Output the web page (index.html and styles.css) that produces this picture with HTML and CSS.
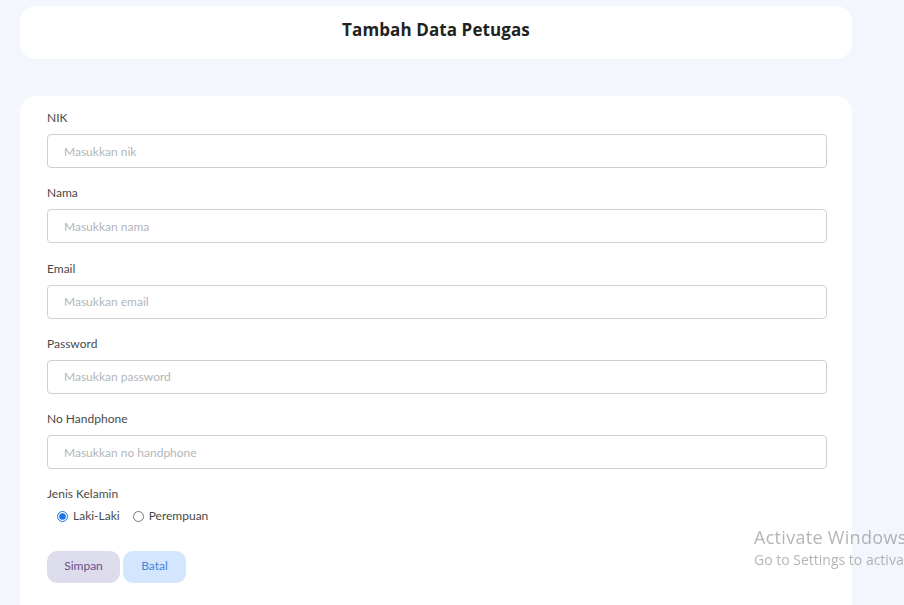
FILE: index.html
```html
<!DOCTYPE html>
<html lang="id">
<head>
<meta charset="utf-8">
<title>Tambah Data Petugas</title>
<link rel="stylesheet" href="styles.css">
</head>
<body>
<div class="page">
  <div class="card header-card">
    <h1 class="title">Tambah Data Petugas</h1>
  </div>
  <form class="card form-card">
    <div class="field">
      <label class="label">NIK</label>
      <input class="input" type="text" placeholder="Masukkan nik">
    </div>
    <div class="field">
      <label class="label">Nama</label>
      <input class="input" type="text" placeholder="Masukkan nama">
    </div>
    <div class="field">
      <label class="label">Email</label>
      <input class="input" type="text" placeholder="Masukkan email">
    </div>
    <div class="field">
      <label class="label">Password</label>
      <input class="input" type="text" placeholder="Masukkan password">
    </div>
    <div class="field">
      <label class="label">No Handphone</label>
      <input class="input" type="text" placeholder="Masukkan no handphone">
    </div>
    <div class="field">
      <label class="label">Jenis Kelamin</label>
      <div class="radios">
        <label class="radio"><input type="radio" name="jk" checked><span>Laki-Laki</span></label>
        <label class="radio"><input type="radio" name="jk"><span>Perempuan</span></label>
      </div>
    </div>
    <div class="actions">
      <button type="button" class="btn btn-save">Simpan</button>
      <button type="button" class="btn btn-cancel">Batal</button>
    </div>
  </form>
</div>
<div class="watermark">
  <div class="wm-title">Activate Windows</div>
  <div class="wm-sub">Go to Settings to activate Windows.</div>
</div>
</body>
</html>
```
FILE: styles.css
```css
html, body {
  margin: 0;
  padding: 0;
  background: #f3f6fd;
  overflow: hidden;
}
body {
  font-family: Lato, "Noto Sans", sans-serif;
  color: #3d3d3d;
}
.page {
  width: 832px;
  padding: 6px 0 0 20px;
  display: flex;
  flex-direction: column;
  gap: 37px;
}
.card {
  background: #ffffff;
  border-radius: 16px;
}
.header-card {
  height: 53px;
  display: flex;
  align-items: center;
  justify-content: center;
}
.title {
  margin: 0;
  font-family: "Open Sans", Lato, sans-serif;
  font-size: 17px;
  font-weight: 700;
  color: #222222;
  letter-spacing: 0.1px;
  transform: translateY(-3px);
}
.form-card {
  padding: 14px 25px 40px 27px;
  display: flex;
  flex-direction: column;
  margin: 0;
}
.field {
  display: flex;
  flex-direction: column;
  margin-bottom: 17.25px;
}
.label {
  font-size: 12px;
  line-height: 16px;
  margin-bottom: 8px;
  color: #4a4a4a;
}
.input {
  height: 34px;
  box-sizing: border-box;
  border: 1px solid #cdd1d6;
  border-radius: 4px;
  padding: 0 16px;
  font-family: Lato, "Noto Sans", sans-serif;
  font-size: 12px;
  color: #333;
  outline: none;
}
.input::placeholder {
  color: #b3b6ba;
}
.radios {
  display: flex;
  gap: 13px;
  margin-top: -2px;
  padding-left: 10px;
}
.radio {
  display: flex;
  align-items: center;
  font-size: 12px;
  line-height: 16px;
  color: #4a4a4a;
}
.radio input {
  margin: 0 5px 0 0;
  width: 11px;
  height: 11px;
  accent-color: #1a73e8;
}
.actions {
  display: flex;
  gap: 3px;
  margin-top: 9px;
}
.btn {
  height: 32px;
  border: none;
  border-radius: 10px;
  font-family: Lato, "Noto Sans", sans-serif;
  font-size: 12px;
  line-height: 14px;
  padding: 0 0 2px 0;
  cursor: pointer;
}
.btn-save {
  width: 73px;
  background: #dcdcec;
  color: #6b4f8c;
}
.btn-cancel {
  width: 63px;
  background: #d3e6fd;
  color: #4b7fe0;
}
.watermark {
  position: fixed;
  left: 754px;
  top: 524px;
  white-space: nowrap;
  font-family: "Open Sans", "Noto Sans", sans-serif;
  color: rgba(120, 120, 120, 0.55);
  pointer-events: none;
}
.wm-title {
  font-size: 18px;
  line-height: 26px;
  letter-spacing: 0.3px;
}
.wm-sub {
  font-size: 14px;
  line-height: 20px;
}
```
